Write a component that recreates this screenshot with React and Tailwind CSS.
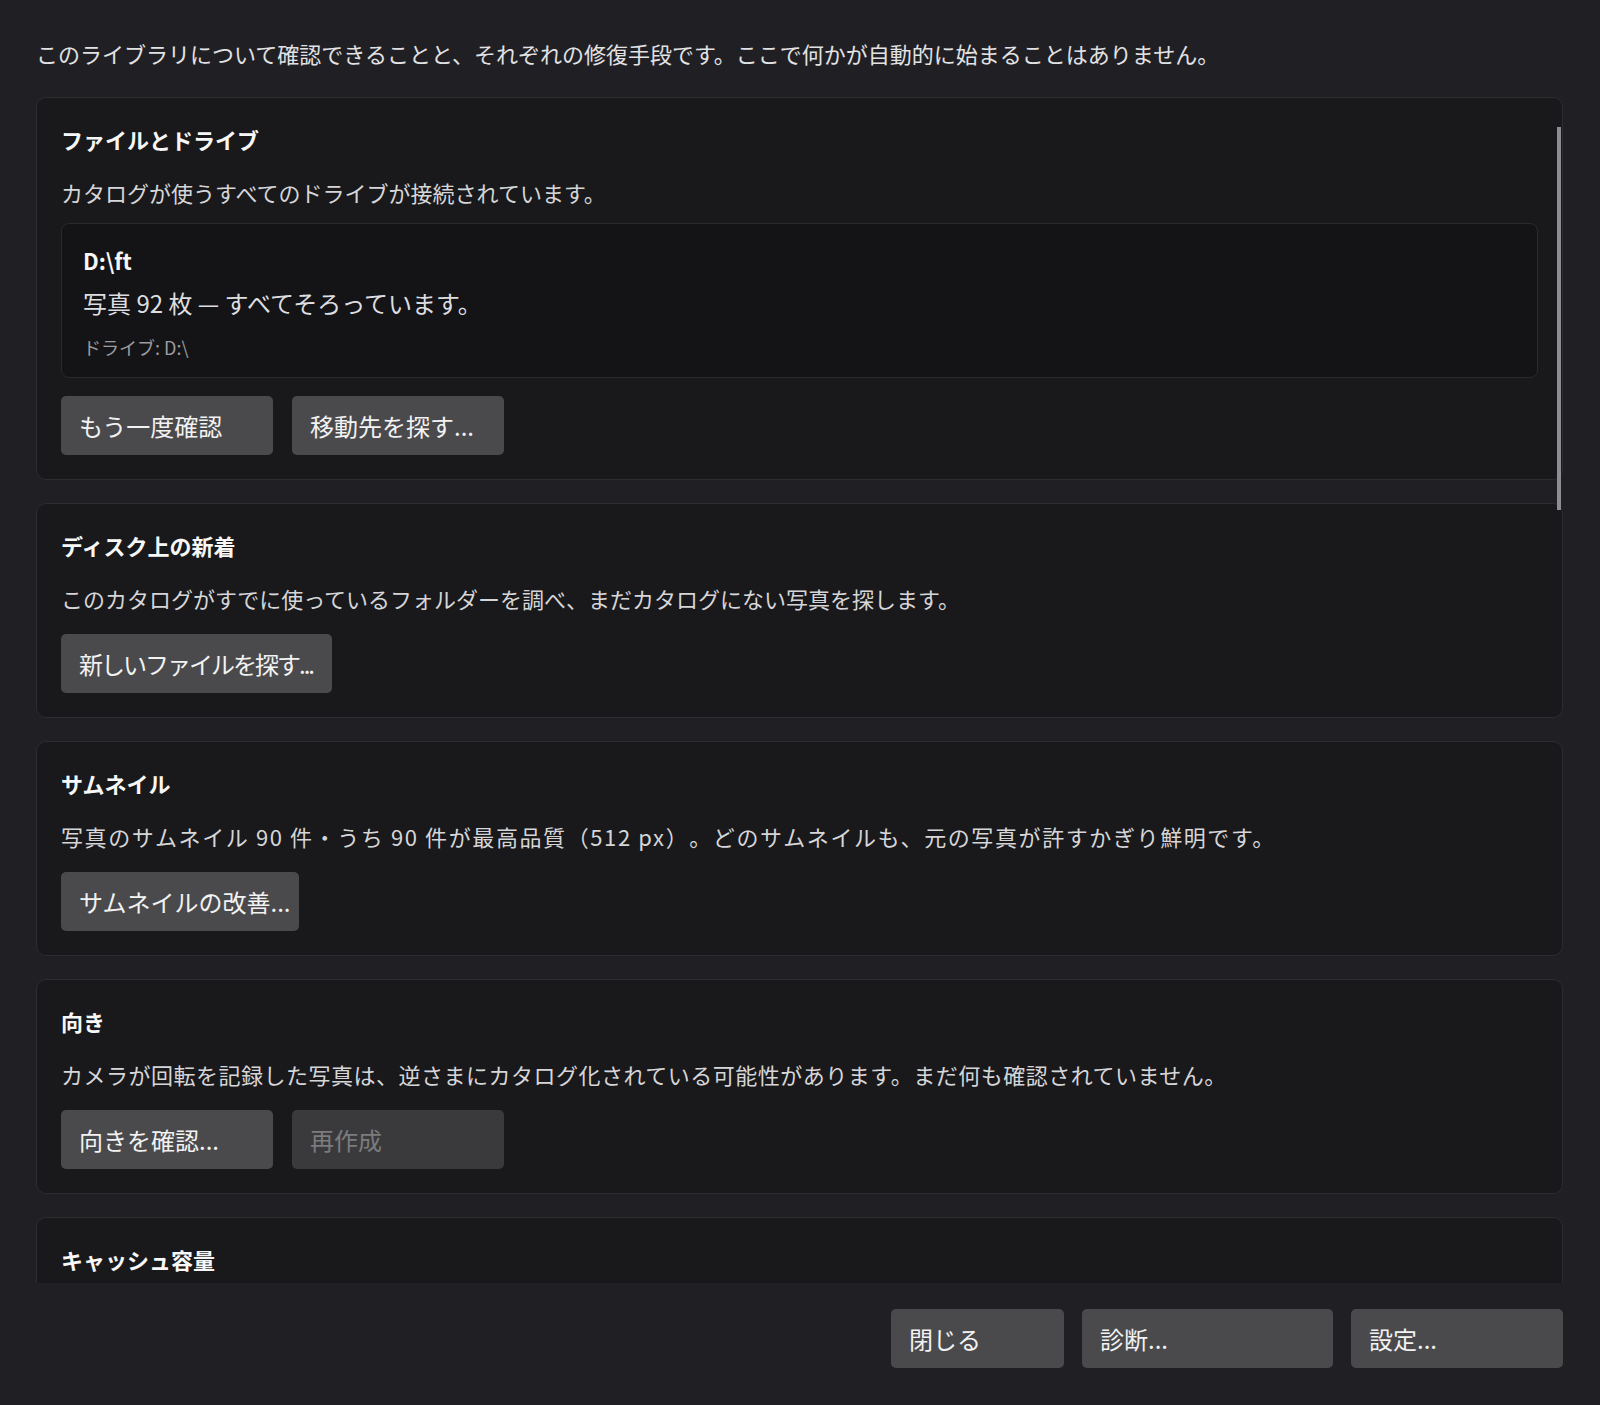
import React from "react";

const FONT = "font-['Noto_Sans_CJK_JP','Noto_Sans',sans-serif]";

const Button = ({ children, width, disabled = false, textClass = "" }) => (
    <button
        type="button"
        disabled={disabled}
        className={`h-[59px] shrink-0 whitespace-nowrap rounded-[5px] pl-[18px] text-left text-[24px] leading-[59px] ${width} ${textClass} ${
            disabled ? "bg-[#3a3a3d] text-[#7c7c7e]" : "bg-[#4a4a4d] text-[#f2f2f2]"
        }`}
    >
        {children}
    </button>
);

const Card = ({ title, description, descClass = "", children, className = "" }) => (
    <section
        className={`rounded-[10px] border border-[#2d2d31] bg-[#19191c] px-[24px] pt-[23px] pb-[24px] ${className}`}
    >
        <h2 className="text-[22px] font-bold leading-[36px] text-[#f7f7f7]">{title}</h2>
        {description && (
            <p className={`mt-[17px] whitespace-nowrap text-[22px] leading-[36px] text-[#d6d6d8] ${descClass}`}>
                {description}
            </p>
        )}
        {children}
    </section>
);

const App = () => {
    return (
        <div
            className={`flex h-[1405px] w-full flex-col overflow-hidden bg-[#202024] pl-[36px] pr-[37px] pt-[35px] [text-spacing-trim:space-all] ${FONT}`}
        >
            {/* Intro */}
            <p className="whitespace-nowrap text-[22px] leading-[36px] text-[#e2e2e4]">
                このライブラリについて確認できることと、それぞれの修復手段です。ここで何かが自動的に始まることはありません。
            </p>

            {/* Scrolling list of checks */}
            <div className="relative mt-[26px] h-[1186px] shrink-0 overflow-hidden">
                <div className="flex flex-col gap-[23px]">
                    <Card title="ファイルとドライブ" description="カタログが使うすべてのドライブが接続されています。">
                        <div className="mt-[13px] rounded-[8px] border border-[#2a2a2e] bg-[#141417] px-[21px] pt-[19px] pb-[12px]">
                            <div className="text-[22px] font-bold leading-[34px] text-[#f7f7f7]">D:\ft</div>
                            <div className="text-[24px] leading-[52px] text-[#dedee0]">写真 92 枚 — すべてそろっています。</div>
                            <div className="text-[18px] leading-[36px] text-[#9c9c9f]">ドライブ: D:\</div>
                        </div>
                        <div className="mt-[18px] flex gap-[19px]">
                            <Button width="w-[212px]">もう一度確認</Button>
                            <Button width="w-[212px]">移動先を探す...</Button>
                        </div>
                    </Card>

                    <Card
                        title="ディスク上の新着"
                        description="このカタログがすでに使っているフォルダーを調べ、まだカタログにない写真を探します。"
                    >
                        <div className="mt-[18px] flex gap-[19px]">
                            <Button width="w-[271px]" textClass="tracking-[-2px]">
                                新しいファイルを探す...
                            </Button>
                        </div>
                    </Card>

                    <Card
                        title="サムネイル"
                        description="写真のサムネイル 90 件・うち 90 件が最高品質（512 px）。どのサムネイルも、元の写真が許すかぎり鮮明です。"
                        descClass="tracking-[1.6px]"
                    >
                        <div className="mt-[18px] flex gap-[19px]">
                            <Button width="w-[238px]">サムネイルの改善...</Button>
                        </div>
                    </Card>

                    <Card
                        title="向き"
                        description="カメラが回転を記録した写真は、逆さまにカタログ化されている可能性があります。まだ何も確認されていません。"
                        descClass="tracking-[0.5px]"
                    >
                        <div className="mt-[18px] flex gap-[19px]">
                            <Button width="w-[212px]">向きを確認...</Button>
                            <Button width="w-[212px]" disabled>
                                再作成
                            </Button>
                        </div>
                    </Card>

                    <Card title="キャッシュ容量" className="min-h-[215px]" />
                </div>

                {/* overlay scrollbar thumb */}
                <div className="absolute right-[2px] top-[30px] h-[383px] w-[4px] bg-[#8e8e90]" />
            </div>

            {/* Footer actions */}
            <div className="flex justify-end gap-[18px] pt-[26px]">
                <Button width="w-[173px]">閉じる</Button>
                <Button width="w-[251px]">診断...</Button>
                <Button width="w-[212px]">設定...</Button>
            </div>
        </div>
    );
};

export default App;
